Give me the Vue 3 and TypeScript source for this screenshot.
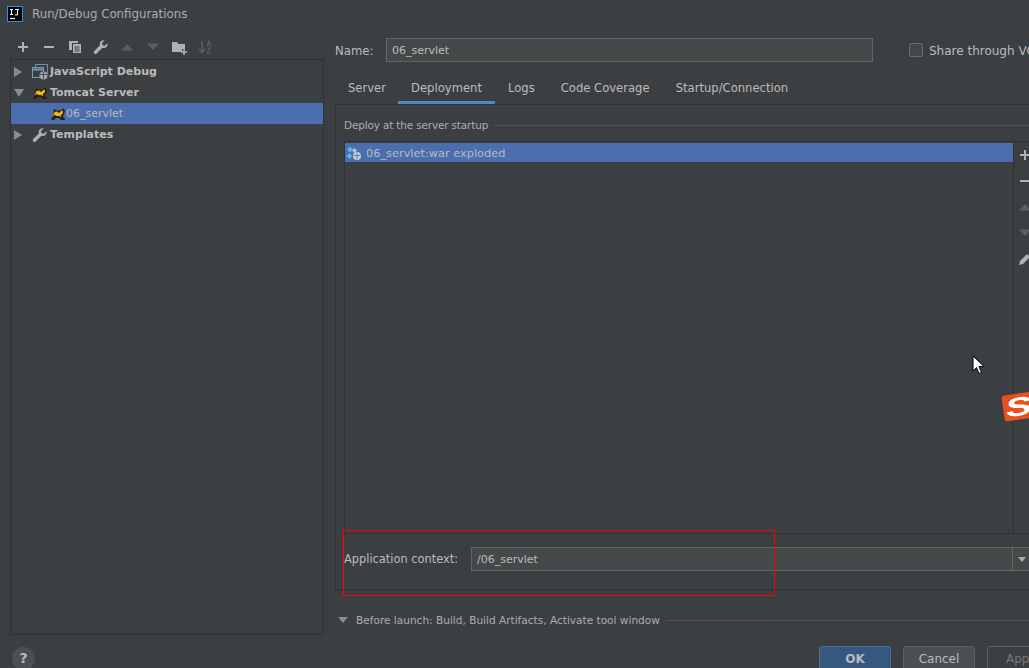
<script setup lang="ts">
import { ref } from 'vue'

const tabs = ['Server', 'Deployment', 'Logs', 'Code Coverage', 'Startup/Connection']
const activeTab = ref('Deployment')
</script>

<template>
  <div class="dialog">
    <header class="titlebar">
      <svg class="logo" width="16" height="16" viewBox="0 0 16 16">
        <rect x="0.5" y="0.5" width="15" height="15" fill="#000" stroke="#2f8fe8" />
        <path d="M3 3.500h3M4.500 3.500v5M3 8.500h3M8 3.500h4M10.500 3.500v4.500q0 1-1 1H8" fill="none" stroke="#fff" stroke-width="1.1" />
        <path d="M3 12.500h5" stroke="#fff" stroke-width="1.2" />
      </svg>
      <span>Run/Debug Configurations</span>
    </header>

    <div class="body">
      <aside class="left">
        <div class="toolbar">
          <svg class="tool" viewBox="0 0 16 16"><path d="M3 8h10M8 3v10" stroke="#afb1b3" stroke-width="2" /></svg>
          <svg class="tool" viewBox="0 0 16 16"><path d="M3 8h10" stroke="#afb1b3" stroke-width="2" /></svg>
          <svg class="tool" viewBox="0 0 16 16">
            <path d="M2 2h9v2H5v7H2z" fill="#afb1b3" />
            <path d="M6 5h8v9H6z" fill="#afb1b3" />
            <path d="M7.500 8h5M7.500 10h5M7.500 12h5" stroke="#3c3f41" />
          </svg>
          <svg class="tool" viewBox="0 0 16 16"><path d="M14.500 4.200 11.800 6.800 9.600 6.200 9 4 11.600 1.400C9.600.9 7.500 1.800 6.900 3.700c-.3.900-.2 1.800.1 2.600L1.300 12c-.7.700-.7 1.700 0 2.400.7.700 1.700.7 2.400 0l5.700-5.700c.8.3 1.700.4 2.600.1 1.900-.6 3-2.600 2.500-4.600z" fill="#afb1b3" /></svg>
          <svg class="tool" viewBox="0 0 16 16"><path d="M2 11.500 8 5l6 6.500z" fill="#5c5f61" /></svg>
          <svg class="tool" viewBox="0 0 16 16"><path d="M2 4.500h12L8 11z" fill="#5c5f61" /></svg>
          <svg class="tool" viewBox="0 0 16 16">
            <path d="M1 3h5l1.500 2H14v5h-3v3H1z" fill="#afb1b3" />
            <path d="M10 13h6M13 10v6" stroke="#afb1b3" stroke-width="1.6" />
          </svg>
          <svg class="tool" viewBox="0 0 16 16">
            <path d="M5 2v11M2 10l3 3.500L8 10" fill="none" stroke="#5c5f61" stroke-width="1.6" />
            <path d="M10 7l1.800-5 1.800 5M10.600 5.400h2.400M10 9h3.600L10 14h3.800" fill="none" stroke="#5c5f61" stroke-width="1.1" />
          </svg>
        </div>

        <div class="tree">
          <div class="row">
            <span class="arrow closed"></span>
            <svg class="ticon" viewBox="0 0 16 16">
              <rect x="3.500" y="0.500" width="12" height="9" fill="none" stroke="#7b8d99" />
              <rect x="0.500" y="3.500" width="11" height="10" fill="#3c3f41" stroke="#6d9fb8" />
              <path d="M0.500 5.500h11" stroke="#6d9fb8" stroke-width="2" />
              <circle cx="11.500" cy="11.500" r="4" fill="#9aa7b0" />
              <path d="M8 10.500h7M11.500 8v7" stroke="#3c3f41" stroke-width="0.8" />
            </svg>
            <b>JavaScript Debug</b>
          </div>
          <div class="row">
            <span class="arrow open"></span>
            <svg class="ticon" viewBox="0 0 16 16">
              <path d="M1 14 3 10 4 3 6.500 4.500h4L13 2.500 15 4l-1 4.500-1.500 1.500 2.500 3v1h-4L9 12H6l-2 2z" fill="#26221a" />
              <path d="M4.500 6 7 5.500l2 1.500 3.500-3 .5 3-2.500 2.500 1 2-2.500-1.500H6.500L5.500 9 3 10z" fill="#f2b90f" />
            </svg>
            <b>Tomcat Server</b>
          </div>
          <div class="row selected child">
            <svg class="ticon" viewBox="0 0 16 16">
              <path d="M1 14 3 10 4 3 6.500 4.500h4L13 2.500 15 4l-1 4.500-1.500 1.500 2.500 3v1h-4L9 12H6l-2 2z" fill="#26221a" />
              <path d="M4.500 6 7 5.500l2 1.500 3.500-3 .5 3-2.500 2.500 1 2-2.500-1.500H6.500L5.500 9 3 10z" fill="#f2b90f" />
            </svg>
            <span class="childname">06_servlet</span>
          </div>
          <div class="row">
            <span class="arrow closed"></span>
            <svg class="ticon" viewBox="0 0 16 16"><path d="M14.500 4.200 11.800 6.800 9.600 6.200 9 4 11.600 1.400C9.600.9 7.500 1.800 6.900 3.700c-.3.900-.2 1.800.1 2.600L1.300 12c-.7.700-.7 1.700 0 2.400.7.700 1.700.7 2.400 0l5.700-5.700c.8.3 1.700.4 2.600.1 1.900-.6 3-2.600 2.500-4.600z" fill="#afb1b3" /></svg>
            <b>Templates</b>
          </div>
        </div>
      </aside>

      <main class="content">
        <div class="name-row">
          <label class="name-label">Name:</label>
          <div class="input name-input">06_servlet</div>
          <span class="checkbox"></span>
          <span class="share">Share through VCS</span>
        </div>

        <nav class="tabs">
          <span v-for="t in tabs" :key="t" class="tab" :class="{ active: t === activeTab }">{{ t }}</span>
        </nav>

        <section class="panel">
          <div class="group-title"><span>Deploy at the server startup</span><i class="rule"></i></div>
          <div class="deploy-box">
            <div class="list">
              <div class="list-row">
                <svg class="artifact" viewBox="0 0 16 16">
                  <path d="M4 1.500 7 4.500 4 7.500 1 4.500zM3.500 8 6.500 11 3.500 14 .5 11z" fill="#5bb5ee" />
                  <path d="M8.500 3 11 5.500 8.500 8 6 5.500z" fill="#a8c8e0" />
                  <circle cx="11" cy="11" r="4" fill="#c7ced4" />
                  <path d="M7.500 10.500h7M11 7.500v7" stroke="#4b6eaf" stroke-width="0.8" />
                </svg>
                <span>06_servlet:war exploded</span>
              </div>
            </div>
            <div class="side-tools">
              <svg class="stool" viewBox="0 0 16 16"><path d="M3 8h10M8 3v10" stroke="#afb1b3" stroke-width="2" /></svg>
              <svg class="stool" viewBox="0 0 16 16"><path d="M3 8h10" stroke="#afb1b3" stroke-width="2" /></svg>
              <svg class="stool" viewBox="0 0 16 16"><path d="M2 11.500 8 5l6 6.500z" fill="#5c5f61" /></svg>
              <svg class="stool" viewBox="0 0 16 16"><path d="M2 4.500h12L8 11z" fill="#5c5f61" /></svg>
              <svg class="stool" viewBox="0 0 16 16"><path d="M2 14l1-4 7-7 3 3-7 7z" fill="#afb1b3" /></svg>
            </div>
          </div>
          <div class="context-row">
            <label class="context-label">Application context:</label>
            <div class="input combo">
              <span class="combo-text">/06_servlet</span>
              <span class="combo-btn"><span class="combo-arrow"></span></span>
            </div>
          </div>
        </section>

        <div class="before">
          <span class="arrow open small"></span>
          <span>Before launch: Build, Build Artifacts, Activate tool window</span>
          <i class="rule"></i>
        </div>

        <div class="buttons">
          <button class="btn ok">OK</button>
          <button class="btn cancel">Cancel</button>
          <button class="btn apply">Apply</button>
        </div>
      </main>
    </div>

    <span class="help">?</span>

    <!-- things lying over the dialog: annotation, mouse pointer, IME badge -->
    <div class="annotation"></div>
    <svg class="cursor" width="13" height="20" viewBox="0 0 13 20">
      <path d="M1 1v15l3.500-3.500 2.500 6 2.500-1-2.500-6H12z" fill="#fff" stroke="#000" stroke-width="1" />
    </svg>
    <div class="sogou"><span>S</span></div>
  </div>
</template>

<style>
html,
body {
  margin: 0;
  background: #3c3f41;
}
</style>

<style scoped>
.dialog {
  position: relative;
  width: 1029px;
  height: 668px;
  overflow: hidden;
  background: #3c3f41;
  color: #bbbbbb;
  font-family: "DejaVu Sans", sans-serif;
  font-size: 12px;
  display: flex;
  flex-direction: column;
}
.titlebar {
  height: 28px;
  flex: none;
  display: flex;
  align-items: center;
  padding-left: 7px;
  gap: 9px;
  font-size: 11.8px;
  color: #a9adb0;
}
.logo {
  flex: none;
}
.body {
  flex: 1;
  display: flex;
  padding-left: 10px;
  min-height: 0;
}
.left {
  width: 314px;
  flex: none;
  display: flex;
  flex-direction: column;
}
.toolbar {
  box-sizing: border-box;
  height: 31px;
  display: flex;
  align-items: center;
  gap: 10px;
  padding: 6px 0 0 5px;
  flex: none;
}
.tool {
  width: 16px;
  height: 16px;
  flex: none;
}
.tree {
  height: 576px;
  box-sizing: border-box;
  border: 1px solid #2f3133;
  padding-top: 1px;
  font-size: 11px;
}
.row {
  height: 21px;
  display: flex;
  align-items: center;
  padding-left: 3px;
}
.row b {
  font-weight: bold;
  margin-left: 2px;
}
.row.child {
  padding-left: 39px;
}
.row.selected {
  background: #4b6eaf;
}
.arrow {
  width: 0;
  height: 0;
  flex: none;
}
.arrow.closed {
  border-left: 8px solid #8a8d8f;
  border-top: 5px solid transparent;
  border-bottom: 5px solid transparent;
  margin-right: 10px;
}
.arrow.open {
  border-top: 8px solid #8a8d8f;
  border-left: 5px solid transparent;
  border-right: 5px solid transparent;
  margin-right: 8px;
}
.ticon {
  width: 16px;
  height: 16px;
  flex: none;
}
.content {
  flex: 1;
  margin-left: 11px;
  min-width: 0;
  display: flex;
  flex-direction: column;
}
.name-row {
  height: 24px;
  margin-top: 10px;
  display: flex;
  align-items: center;
  flex: none;
}
.name-label {
  width: 51px;
  flex: none;
  padding-top: 2px;
  font-size: 11.7px;
}
.input {
  box-sizing: border-box;
  height: 24px;
  border: 1px solid #646464;
  background: #45494a;
  display: flex;
  align-items: center;
  padding-left: 5px;
  font-size: 11px;
}
.name-input {
  width: 487px;
  flex: none;
}
.checkbox {
  box-sizing: border-box;
  width: 14px;
  height: 14px;
  margin-left: 36px;
  border: 1px solid #6b6b6b;
  border-radius: 2px;
  background: #43494a;
  flex: none;
}
.share {
  margin-left: 6px;
  padding-top: 2px;
  white-space: nowrap;
}
.tabs {
  display: flex;
  height: 32px;
  margin-top: 10px;
  flex: none;
  font-size: 11.6px;
}
.tab {
  box-sizing: border-box;
  padding: 0 13px;
  height: 32px;
  line-height: 33px;
}
.tab:first-child {
  margin-right: -1px;
}
.tab.active {
  border-bottom: 3px solid #4a88c7;
}
.panel {
  width: 708px;
  height: 486px;
  flex: none;
  box-sizing: border-box;
  border: 1px solid #323232;
  border-right: 0;
  padding: 12px 0 0 8px;
  display: flex;
  flex-direction: column;
}
.group-title {
  display: flex;
  align-items: center;
  height: 16px;
  gap: 6px;
  flex: none;
  font-size: 10.5px;
  letter-spacing: -0.17px;
  color: #a9adb0;
  white-space: nowrap;
}
.rule {
  flex: 1;
  height: 1px;
  background: #515151;
}
.deploy-box {
  margin-top: 8px;
  height: 393px;
  flex: none;
  box-sizing: border-box;
  border: 1px solid #323232;
  border-right: 0;
  display: flex;
}
.list {
  width: 668px;
  flex: none;
  padding-top: 1px;
  border-right: 1px solid #323232;
}
.list-row {
  height: 19px;
  background: #4b6eaf;
  display: flex;
  align-items: center;
  gap: 4px;
  padding-left: 1px;
  font-size: 11.35px;
}
.artifact {
  width: 16px;
  height: 16px;
}
.side-tools {
  padding: 5px 0 0 3px;
  display: flex;
  flex-direction: column;
  gap: 10px;
}
.stool {
  width: 16px;
  height: 16px;
  flex: none;
}
.context-row {
  display: flex;
  align-items: center;
  height: 24px;
  margin-top: 13px;
  flex: none;
}
.context-label {
  width: 127px;
  flex: none;
  font-size: 11.4px;
}
.combo {
  flex: 1;
  padding-left: 5px;
  padding-right: 0;
  justify-content: space-between;
  min-width: 0;
}
.combo-btn {
  box-sizing: border-box;
  width: 30px;
  height: 22px;
  border-left: 1px solid #646464;
  display: flex;
  align-items: center;
  padding-left: 5px;
  flex: none;
}
.combo-arrow {
  width: 0;
  height: 0;
  border-top: 5px solid #aaa;
  border-left: 4px solid transparent;
  border-right: 4px solid transparent;
}
.before {
  display: flex;
  align-items: center;
  height: 16px;
  margin-top: 22px;
  flex: none;
  font-size: 10.55px;
  color: #a9adb0;
  padding-left: 3px;
  white-space: nowrap;
}
.arrow.small {
  border-top-width: 6px;
  border-left-width: 5px;
  border-right-width: 5px;
  margin-right: 8px;
}
.before .rule {
  margin-left: 6px;
}
.buttons {
  display: flex;
  gap: 12px;
  margin-top: 18px;
  padding-left: 484px;
  flex: none;
}
.btn {
  box-sizing: border-box;
  width: 72px;
  height: 28px;
  flex: none;
  border-radius: 3px;
  font: inherit;
  padding: 0 0 3px;
}
.ok {
  background: #365880;
  border: 1px solid #4c708c;
  color: #bbbbbb;
  font-weight: bold;
}
.cancel {
  background: #4c5052;
  border: 1px solid #5e6060;
  color: #bbbbbb;
}
.apply {
  background: #3c3f41;
  border: 1px solid #5e6060;
  color: #777777;
}
.help {
  position: absolute;
  left: 12px;
  top: 647px;
  width: 23px;
  height: 23px;
  border-radius: 50%;
  background: #4c5052;
  color: #bbbbbb;
  font-weight: bold;
  font-size: 14px;
  line-height: 23px;
  text-align: center;
}
.annotation {
  position: absolute;
  left: 343px;
  top: 530px;
  width: 432px;
  height: 66px;
  box-sizing: border-box;
  border: 1px solid #f00;
  z-index: 5;
}
.cursor {
  position: absolute;
  left: 972px;
  top: 355px;
}
.sogou {
  position: absolute;
  left: 1003px;
  top: 393px;
  width: 40px;
  height: 26px;
  background: #e8501e;
  border-radius: 3px;
  transform: rotate(-8deg);
  overflow: hidden;
}
.sogou span {
  display: block;
  color: #fff;
  font-family: "Liberation Sans", sans-serif;
  font-weight: bold;
  font-size: 26px;
  line-height: 26px;
  padding-left: 2px;
  transform: scaleX(1.5) skewX(-8deg);
  transform-origin: left center;
}
</style>
